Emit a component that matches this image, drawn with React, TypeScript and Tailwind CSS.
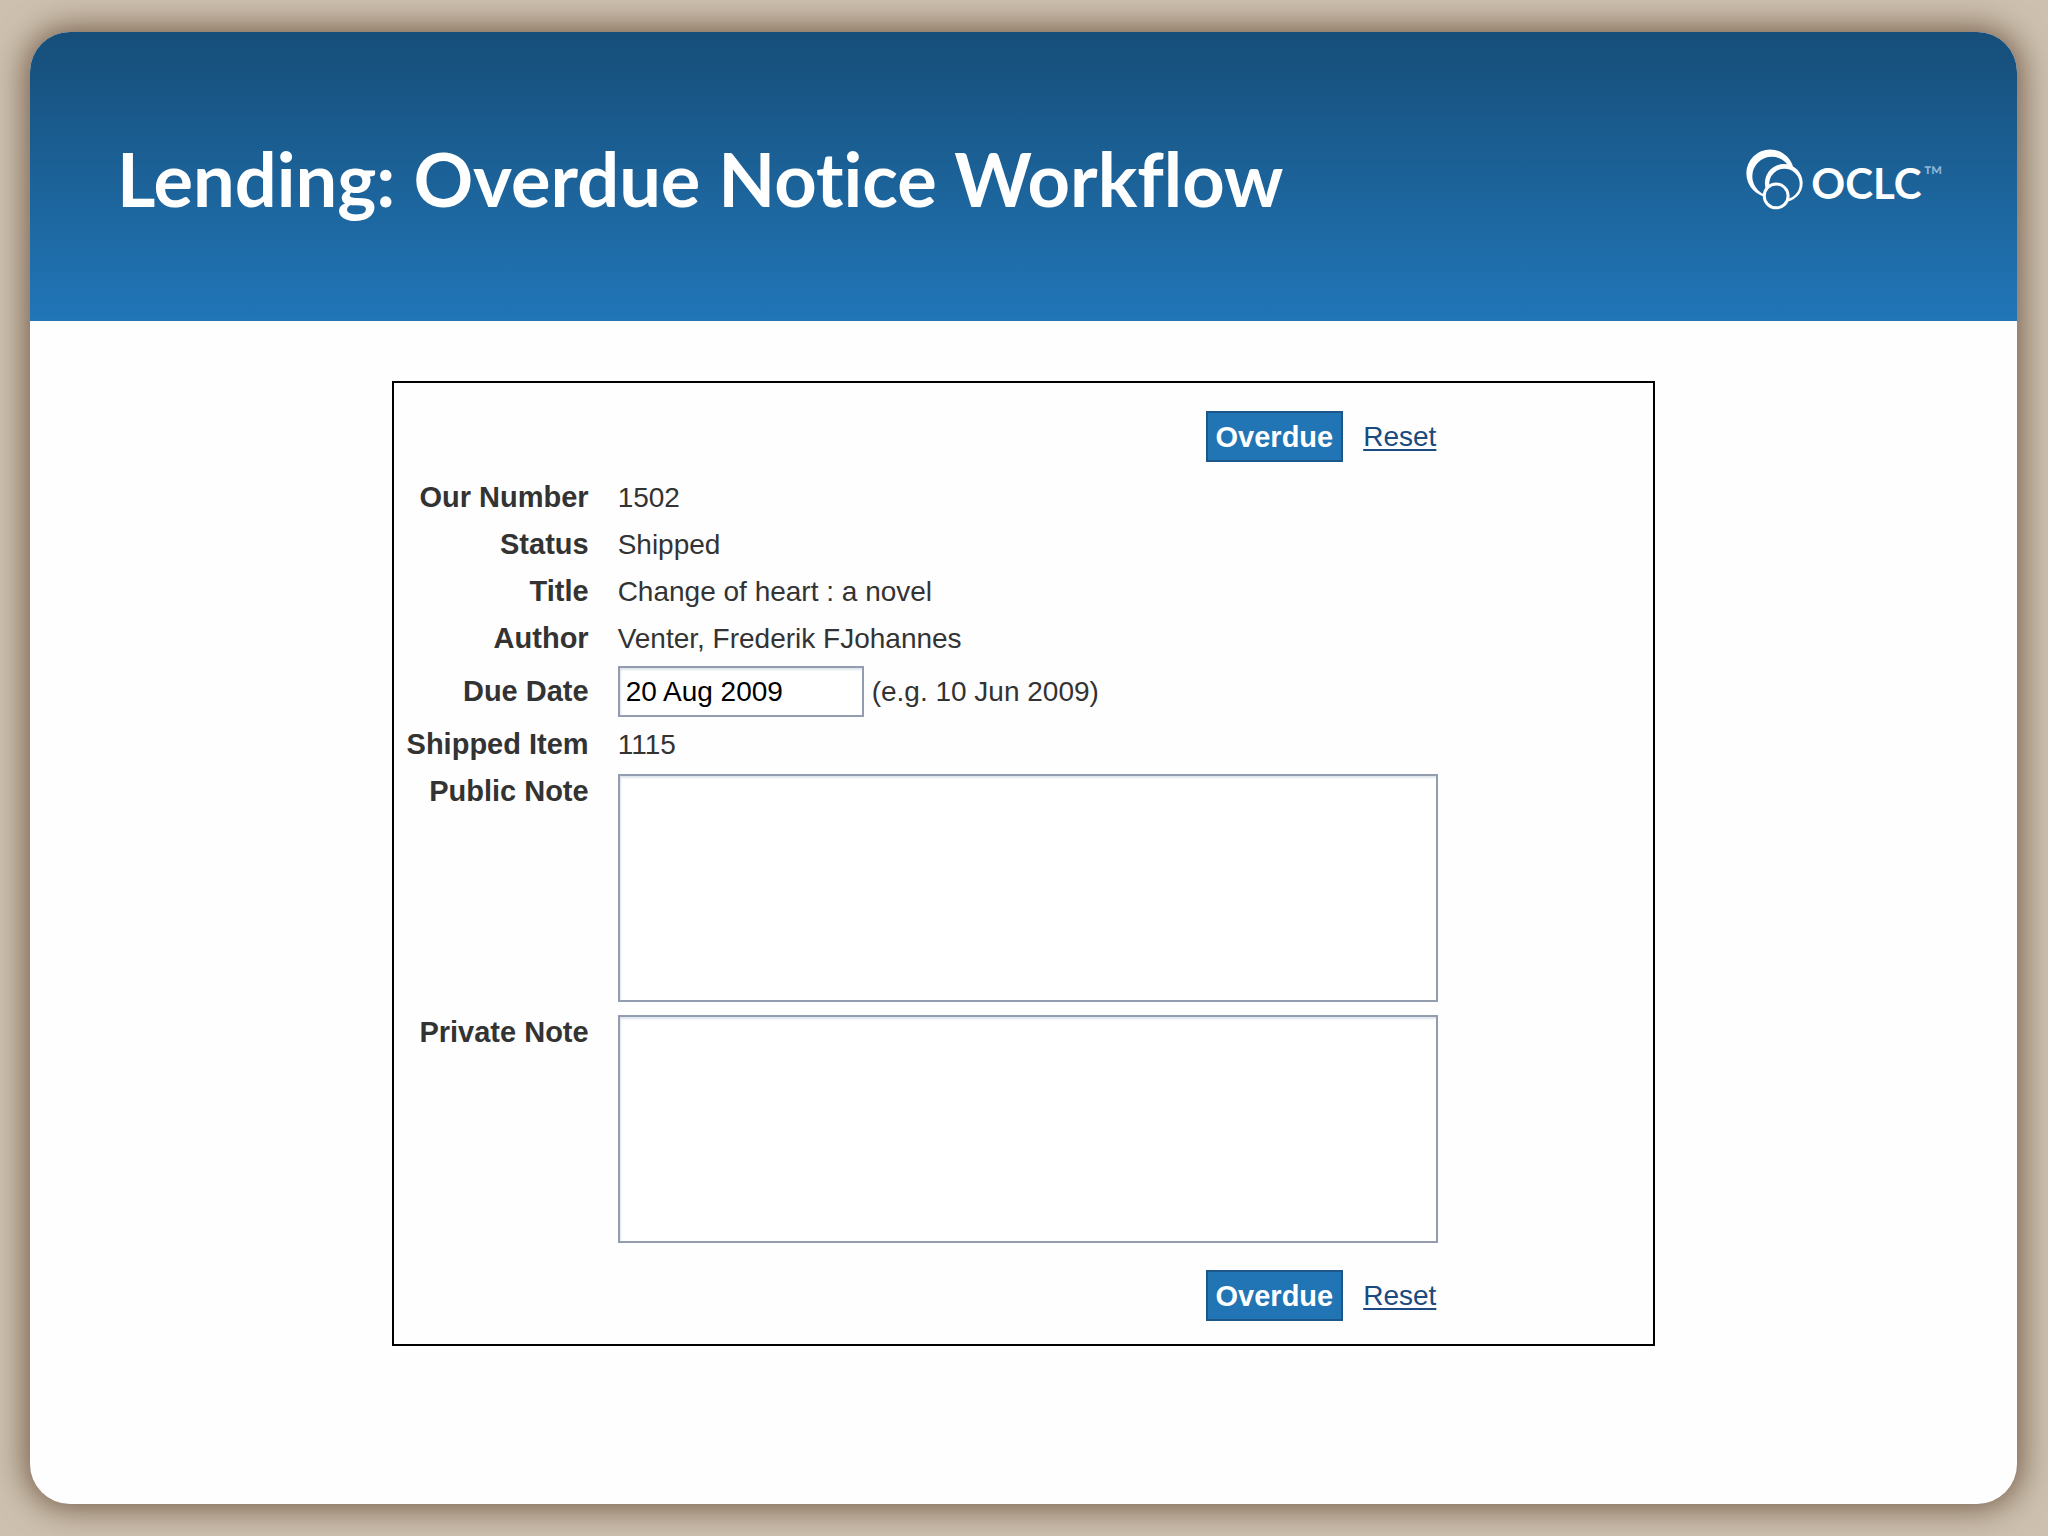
import type { ReactNode } from "react";

function LogoMark() {
  return (
    <svg viewBox="75 57 172 183" className="h-[61px] w-[57px]" aria-hidden="true">
      <defs>
        <mask id="outside-medium" maskUnits="userSpaceOnUse" x="60" y="40" width="200" height="210">
          <rect x="60" y="40" width="200" height="210" fill="white" />
          <circle cx="189" cy="159" r="55" fill="black" />
          <circle cx="166" cy="198" r="38" fill="black" />
        </mask>
        <mask id="outside-small" maskUnits="userSpaceOnUse" x="60" y="40" width="200" height="210">
          <rect x="60" y="40" width="200" height="210" fill="white" />
          <circle cx="166" cy="198" r="38" fill="black" />
        </mask>
      </defs>
      <g fill="white" fillRule="evenodd">
        <path
          mask="url(#outside-medium)"
          d="M76 130a72 72 0 1 0 144 0a72 72 0 1 0 -144 0ZM94 139a59 59 0 1 0 118 0a59 59 0 1 0 -118 0Z"
        />
        <path
          mask="url(#outside-small)"
          d="M132 159a57 57 0 1 0 114 0a57 57 0 1 0 -114 0ZM145 162a46 46 0 1 0 92 0a46 46 0 1 0 -92 0Z"
        />
      </g>
      <circle cx="166" cy="198" r="36" fill="none" stroke="white" strokeWidth="9" />
    </svg>
  );
}

function Logo() {
  return (
    <div className="flex items-center gap-2 pt-1.5 text-white">
      <LogoMark />
      <div className="flex items-start gap-0.5 pt-1.5 font-['Lato',sans-serif]">
        <span className="text-[42px] leading-[48px] font-bold">OCLC</span>
        <span className="pt-1 text-[26px] leading-6 text-[#8fb8d8]">™</span>
      </div>
    </div>
  );
}

function Actions() {
  return (
    <div className="flex items-center justify-end gap-5 pr-0.5">
      <button
        type="submit"
        className="h-[51px] border-2 border-[#1d5789] bg-[#2275b5] px-2 text-[29px] leading-8 font-bold text-white"
      >
        Overdue
      </button>
      <a href="#reset" className="text-[28px] leading-8 text-[#1b4a80] underline decoration-2 underline-offset-3">
        Reset
      </a>
    </div>
  );
}

function Row({ label, children }: { label: string; children: ReactNode }) {
  return (
    <div className="grid grid-cols-[195px_1fr] gap-x-[29px] leading-[47px]">
      <dt className="text-right text-[29px] leading-[47px] font-bold whitespace-nowrap">{label}</dt>
      <dd>{children}</dd>
    </div>
  );
}

function NoteRow({ id, label }: { id: string; label: string }) {
  return (
    <div className="grid grid-cols-[195px_1fr] gap-x-[29px]">
      <label htmlFor={id} className="text-right text-[29px] leading-[47px] font-bold whitespace-nowrap">
        {label}
      </label>
      <textarea
        id={id}
        className="mt-1.5 mb-[7px] block h-[228px] w-full resize-none border-2 border-[#949db0] bg-white p-2 shadow-[inset_1px_2px_2px_#dfe5ee] outline-none"
      />
    </div>
  );
}

export default function App() {
  return (
    <div className="flex min-h-screen flex-col bg-[#cdc0af] py-8 pr-[31px] pl-[30px]">
      <main className="flex flex-1 flex-col overflow-hidden rounded-[40px] bg-[#fefefe] shadow-[0_0_32px_4px_#735b47]">
        <header className="flex h-[289px] items-center justify-between bg-linear-to-b from-[#164e79] to-[#2176b8] pr-[74px] pl-[87px]">
          <h1 className="pt-1 font-['Lato',sans-serif] text-[74px] leading-[80px] font-bold text-white [font-variant-ligatures:none]">
            Lending: Overdue Notice Workflow
          </h1>
          <Logo />
        </header>
        <form
          className="mx-auto mt-[60px] w-[63.6%] border-2 border-black pt-7 pr-[215px] pb-[23px] font-['Liberation_Sans',Arial,sans-serif] text-[28px] text-[#333]"
          onSubmit={(event) => event.preventDefault()}
        >
          <Actions />
          <dl className="mt-3">
            <Row label="Our Number">1502</Row>
            <Row label="Status">Shipped</Row>
            <Row label="Title">Change of heart : a novel</Row>
            <Row label="Author">Venter, Frederik FJohannes</Row>
          </dl>
          <div className="grid h-[59px] grid-cols-[195px_1fr] items-center gap-x-[29px]">
            <label htmlFor="due-date" className="text-right text-[29px] font-bold whitespace-nowrap">
              Due Date
            </label>
            <div className="flex items-center gap-2">
              <input
                id="due-date"
                type="text"
                defaultValue="20 Aug 2009"
                className="h-[51px] w-[246px] border-2 border-[#949db0] bg-white px-1.5 text-black shadow-[inset_1px_2px_2px_#dfe5ee] outline-none"
              />
              <span>(e.g. 10 Jun 2009)</span>
            </div>
          </div>
          <dl>
            <Row label="Shipped Item">1115</Row>
          </dl>
          <NoteRow id="public-note" label="Public Note" />
          <NoteRow id="private-note" label="Private Note" />
          <div className="mt-5">
            <Actions />
          </div>
        </form>
      </main>
    </div>
  );
}
